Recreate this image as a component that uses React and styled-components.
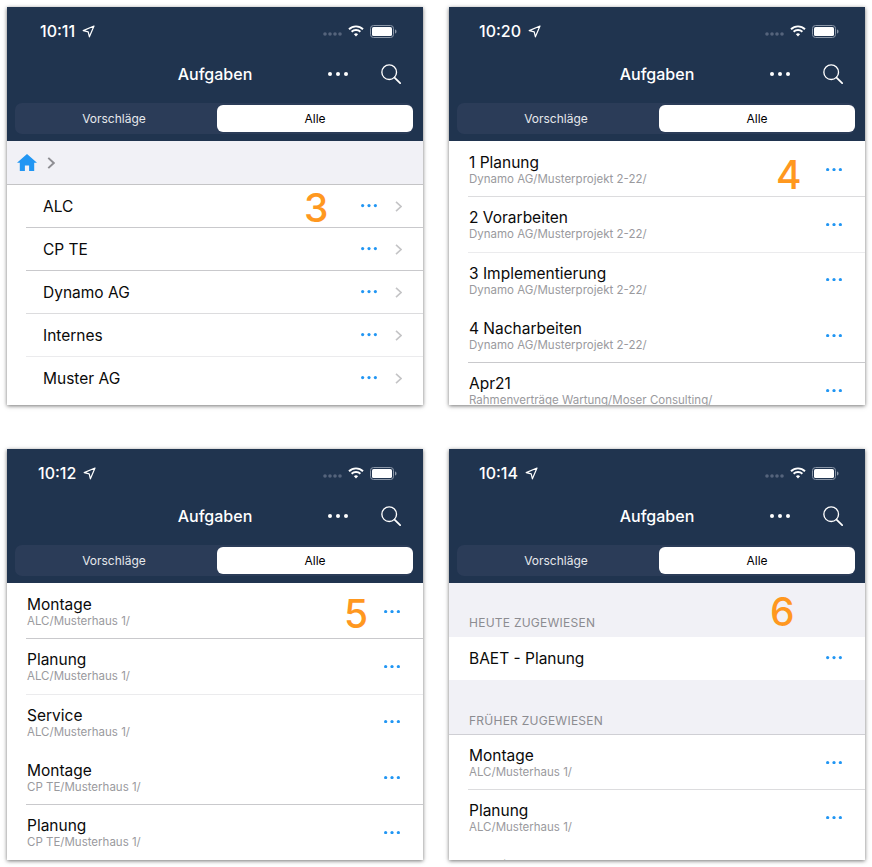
import React from "react";
import styled, { createGlobalStyle } from "styled-components";

const Global = createGlobalStyle`
  html, body { margin: 0; padding: 0; background: #fff; }
  body { font-family: Inter, "Liberation Sans", sans-serif; width: 872px; height: 867px; overflow: hidden; }
`;

const Sheet = styled.div`
  display: grid;
  grid-template-columns: 416px 416px;
  grid-template-rows: 398px 411px;
  column-gap: 26px;
  row-gap: 44px;
  padding: 7px 0 0 7px;
`;

const Phone = styled.section`
  position: relative;
  display: flex;
  flex-direction: column;
  overflow: hidden;
  background: #fff;
`;

const Frame = styled.div`
  box-shadow: 0 1px 4px rgba(0, 0, 0, 0.55);
  display: flex;
  min-height: 0;
  & > * { flex: 1; min-width: 0; }
`;

const Header = styled.header`
  flex: 0 0 134px;
  background: #20344f;
  color: #fff;
  display: flex;
  flex-direction: column;
`;

const StatusBar = styled.div`
  height: 48px;
  display: flex;
  align-items: center;
  padding: 0 26px 0 ${(p) => p.$left}px;
`;

const Time = styled.span`
  font-size: 16px;
  font-weight: 500;
  margin-right: 7px;
`;

const StatusIcons = styled.div`
  margin-left: auto;
  display: flex;
  align-items: center;
  gap: 6px;
`;

const NavBar = styled.div`
  height: 38px;
  display: grid;
  grid-template-columns: 1fr auto 1fr;
  align-items: center;
  margin-bottom: 10px;
`;

const Title = styled.h1`
  grid-column: 2;
  margin: 0;
  font-size: 16px;
  font-weight: 500;
  line-height: 20px;
`;

const NavActions = styled.div`
  display: flex;
  justify-content: flex-end;
  align-items: center;
  gap: 33px;
  padding-right: 22px;
`;

const Segments = styled.div`
  margin: 0 10px 0 8px;
  height: 31px;
  border-radius: 7px;
  background: #2b3c58;
  display: grid;
  grid-template-columns: 202px 196px;
  align-items: center;
`;

const Segment = styled.div`
  height: ${(p) => (p.$active ? "27px" : "auto")};
  line-height: 27px;
  border-radius: 6px;
  text-align: center;
  font-size: 12px;
  font-weight: 400;
  background: ${(p) => (p.$active ? "#fff" : "transparent")};
  color: ${(p) => (p.$active ? "#000" : "#e6e8ec")};
  padding-right: ${(p) => (p.$active ? 0 : 4)}px;
`;

const Breadcrumb = styled.div`
  height: 44px;
  box-sizing: border-box;
  background: #f1f1f6;
  border-bottom: 1px solid #c4c4c6;
  display: flex;
  align-items: center;
  padding-left: 10px;
  gap: 10px;
`;

const List = styled.div`
  flex: 1;
  min-height: 0;
  overflow: hidden;
  background: #fff;
  padding-top: ${(p) => p.$top || 0}px;
`;

const Row = styled.div`
  box-sizing: border-box;
  height: ${(p) => p.$height}px;
  margin-left: ${(p) => p.$inset}px;
  padding-right: ${(p) => p.$right}px;
  border-bottom: 1px solid ${(p) => p.$line || "transparent"};
  display: flex;
  align-items: center;
`;

const RowText = styled.div`
  flex: 1;
  min-width: 0;
  padding: 1px 0 0 ${(p) => p.$pad}px;
`;

const RowTitle = styled.div`
  font-size: 15.5px;
  line-height: 19px;
  color: #0a0a0a;
  white-space: nowrap;
`;

const RowSub = styled.div`
  font-size: 11.5px;
  line-height: 14px;
  color: #9a9a9e;
  white-space: nowrap;
`;

const Chevron = styled.span`
  display: inline-flex;
  margin-left: 18px;
`;

const SectionLabel = styled.div`
  box-sizing: border-box;
  height: ${(p) => p.$height}px;
  background: #f1f1f6;
  color: #8c8c91;
  font-size: 12px;
  letter-spacing: 0.25px;
  line-height: 15px;
  padding: 0 0 ${(p) => (p.$line ? 6 : 7)}px 20px;
  display: flex;
  align-items: flex-end;
  border-bottom: ${(p) => (p.$line ? "1px solid #cfcfd4" : "none")};
`;

const Callout = styled.span`
  position: absolute;
  left: ${(p) => p.$x}px;
  top: ${(p) => p.$y}px;
  font-size: 39px;
  line-height: 40px;
  font-weight: 500;
  color: #ff981f;
`;

const Arrow = () => (
  <svg width="13" height="13" viewBox="0 0 13 13" fill="none" stroke="#fff" strokeWidth="1.2" strokeLinejoin="round">
    <path d="M12 1 1.2 5.6l5 1.2 1.2 5z" />
  </svg>
);
const Cell = () => (
  <svg width="19" height="4" viewBox="0 0 19 4" fill="#55647c" style={{ marginTop: 6 }}>
    <circle cx="2" cy="2" r="1.8" /><circle cx="7" cy="2" r="1.8" /><circle cx="12" cy="2" r="1.8" /><circle cx="17" cy="2" r="1.8" />
  </svg>
);
const Wifi = () => (
  <svg width="16" height="12" viewBox="0 0 16 12" fill="none" stroke="#fff" strokeWidth="1.9" style={{ marginTop: -1 }}>
    <path d="M1 4.2a10 10 0 0 1 14 0" />
    <path d="M3.6 6.8a6.4 6.4 0 0 1 8.8 0" />
    <path d="M8 11.6 5.9 9.2a3 3 0 0 1 4.2 0z" fill="#fff" stroke="none" />
  </svg>
);
const Battery = () => (
  <svg width="27" height="13" viewBox="0 0 27 13" fill="none">
    <rect x="0.5" y="0.5" width="23" height="12" rx="3" stroke="#8b97a8" />
    <rect x="2" y="2" width="20" height="9" rx="1.6" fill="#fff" />
    <path d="M25 4.5c1 .3 1.5 1 1.5 2s-.5 1.7-1.5 2z" fill="#8b97a8" />
  </svg>
);
const Dots = ({ color, r, w }) => (
  <svg width={w} height={r * 2} viewBox={`0 0 ${w} ${r * 2}`} fill={color} style={{ flex: "none" }}>
    <circle cx={r} cy={r} r={r} />
    <circle cx={w / 2} cy={r} r={r} />
    <circle cx={w - r} cy={r} r={r} />
  </svg>
);
const Search = () => (
  <svg width="20" height="20" viewBox="0 0 21 21" fill="none" stroke="#fff" strokeWidth="1.4" strokeLinecap="round">
    <circle cx="8.6" cy="8.6" r="7.7" />
    <path d="m14.2 14.2 5.9 5.9" strokeWidth="1.8" />
  </svg>
);
const Home = () => (
  <svg width="20" height="17" viewBox="0 0 20 17" fill="#2196f3">
    <path d="M10 0 0 8.8h2.8V17h5.1v-5.6h4.2V17h5.1V8.8H20z" />
  </svg>
);
const Caret = ({ color, width = 7, height = 11, sw = 1.6 }) => (
  <svg width={width} height={height} viewBox="0 0 7 11" fill="none" stroke={color} strokeWidth={sw}>
    <path d="m1 .8 5 4.7-5 4.7" />
  </svg>
);

const Top = ({ time, left }) => (
  <Header>
    <StatusBar $left={left}>
      <Time>{time}</Time>
      <Arrow />
      <StatusIcons><Cell /><Wifi /><Battery /></StatusIcons>
    </StatusBar>
    <NavBar>
      <Title>Aufgaben</Title>
      <NavActions>
        <Dots color="#fff" r={2} w={20} />
        <Search />
      </NavActions>
    </NavBar>
    <Segments>
      <Segment>Vorschläge</Segment>
      <Segment $active>Alle</Segment>
    </Segments>
  </Header>
);

const C1 = "#c9c9cc", C2 = "#dcdcde", C3 = "#ebebed";

const FolderRow = ({ name, line }) => (
  <Row $height={43} $inset={19} $right={21} $line={line}>
    <RowText $pad={17}><RowTitle>{name}</RowTitle></RowText>
    <Dots color="#2196f3" r={1.6} w={16} />
    <Chevron><Caret color="#c4c4c6" /></Chevron>
  </Row>
);

const TaskRow = ({ name, path, line, height = 55.33 }) => (
  <Row $height={height} $inset={19} $right={23.5} $line={line}>
    <RowText $pad={1}>
      <RowTitle>{name}</RowTitle>
      {path && <RowSub>{path}</RowSub>}
    </RowText>
    <Dots color="#2196f3" r={1.6} w={16} />
  </Row>
);

const dyn = "Dynamo AG/Musterprojekt 2-22/";
const alc = "ALC/Musterhaus 1/";
const cp = "CP TE/Musterhaus 1/";

export default function App() {
  return (
    <>
      <Global />
      <Sheet>
        <Frame>
          <Phone>
            <Top time="10:11" left={33} />
            <Breadcrumb>
              <Home />
              <Caret color="#8e8e93" width={8} height={12} sw={1.8} />
            </Breadcrumb>
            <List>
              <FolderRow name="ALC" line={C1} />
              <FolderRow name="CP TE" line={C1} />
              <FolderRow name="Dynamo AG" line={C2} />
              <FolderRow name="Internes" line={C3} />
              <FolderRow name="Muster AG" />
            </List>
            <Callout $x={297} $y={181}>3</Callout>
          </Phone>
        </Frame>
        <Frame>
          <Phone>
            <Top time="10:20" left={30} />
            <List $top={1}>
              <TaskRow name="1 Planung" path={dyn} line={C2} />
              <TaskRow name="2 Vorarbeiten" path={dyn} line={C3} />
              <TaskRow name="3 Implementierung" path={dyn} />
              <TaskRow name="4 Nacharbeiten" path={dyn} line={C1} />
              <TaskRow name="Apr21" path="Rahmenverträge Wartung/Moser Consulting/" />
            </List>
            <Callout $x={327} $y={148}>4</Callout>
          </Phone>
        </Frame>
        <Frame>
          <Phone>
            <Top time="10:12" left={31} />
            <List $top={1}>
              <TaskRow name="Montage" path={alc} line={C1} />
              <TaskRow name="Planung" path={alc} line={C3} />
              <TaskRow name="Service" path={alc} />
              <TaskRow name="Montage" path={cp} line={C1} />
              <TaskRow name="Planung" path={cp} />
            </List>
            <Callout $x={337} $y={145}>5</Callout>
          </Phone>
        </Frame>
        <Frame>
          <Phone>
            <Top time="10:14" left={30} />
            <List>
              <SectionLabel $height={54}>HEUTE ZUGEWIESEN</SectionLabel>
              <TaskRow name="BAET - Planung" height={43} />
              <SectionLabel $height={55} $line>FRÜHER ZUGEWIESEN</SectionLabel>
              <TaskRow name="Montage" path={alc} line={C2} />
              <TaskRow name="Planung" path={alc} />
              <TaskRow name="Service" path={alc} />
            </List>
            <Callout $x={321} $y={143}>6</Callout>
          </Phone>
        </Frame>
      </Sheet>
    </>
  );
}
